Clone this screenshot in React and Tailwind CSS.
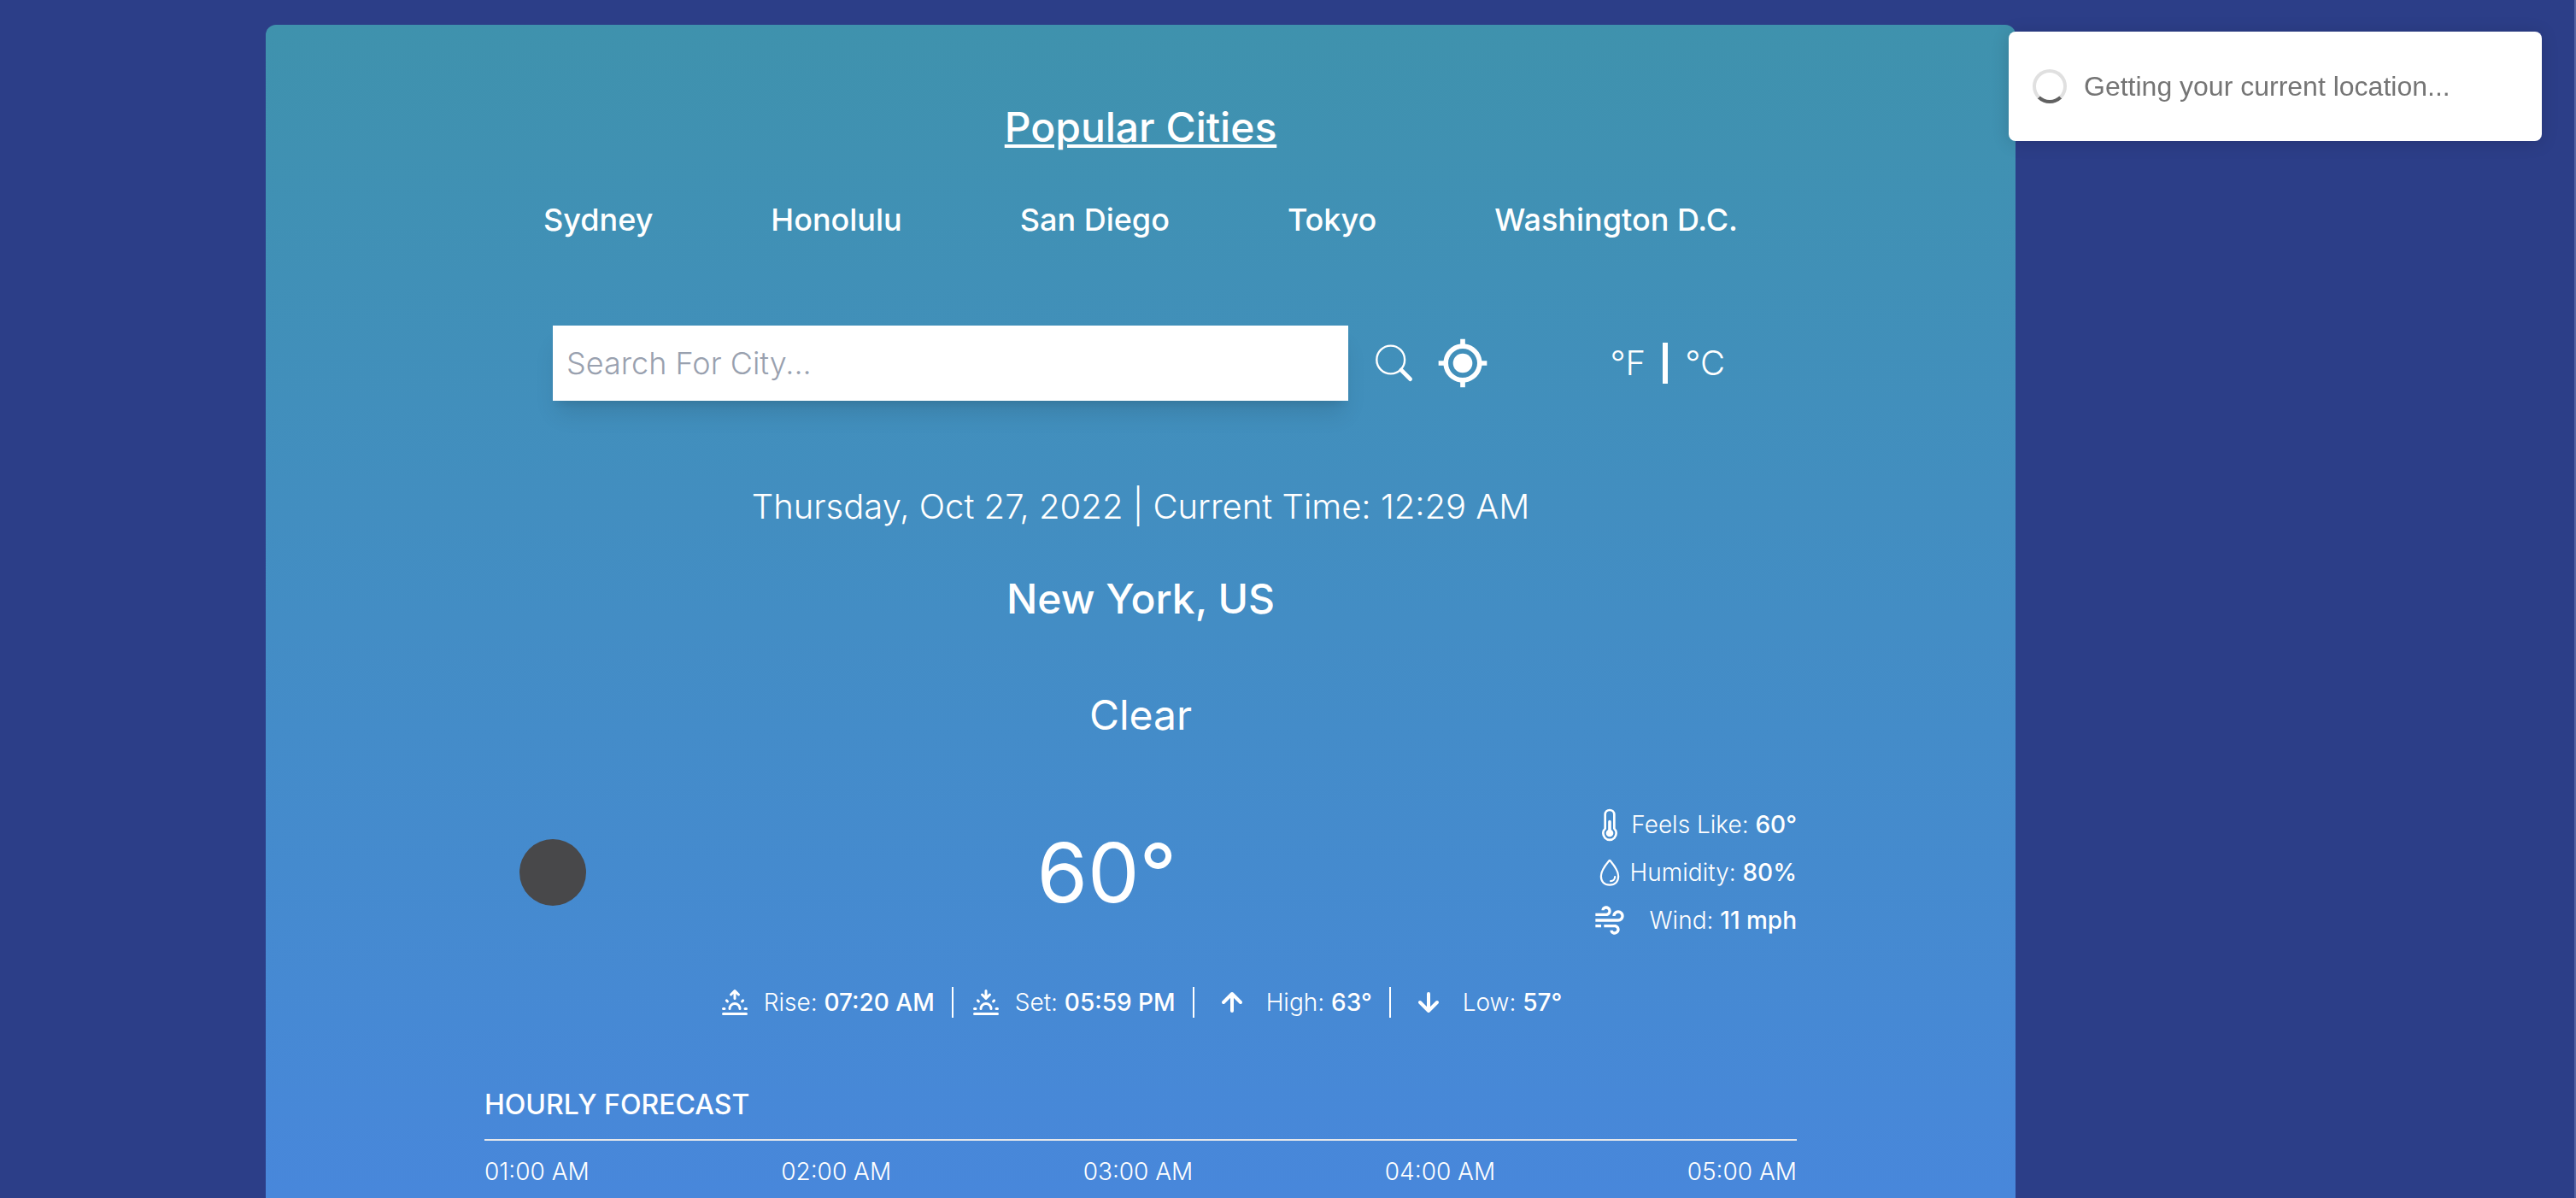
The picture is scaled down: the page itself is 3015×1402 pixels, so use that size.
import { BiCurrentLocation, BiWind } from "react-icons/bi";
import { IoWaterOutline } from "react-icons/io5";
import { TbSunrise, TbSunset } from "react-icons/tb";

const cities = ["Sydney", "Honolulu", "San Diego", "Tokyo", "Washington D.C."];
const hours = ["01:00 AM", "02:00 AM", "03:00 AM", "04:00 AM", "05:00 AM"];

function SearchIcon() {
  return (
    <svg viewBox="0 0 48 48" className="size-12" fill="none" stroke="currentColor" strokeLinecap="round" aria-hidden="true">
      <circle cx="19.7" cy="20" r="16.4" strokeWidth="2.4" />
      <path d="M32 32L42.6 42.6" strokeWidth="4.8" />
    </svg>
  );
}

function ArrowIcon({ d }) {
  return (
    <svg viewBox="0 0 40 40" className="size-10" fill="none" stroke="currentColor" strokeWidth="4" strokeLinecap="round" strokeLinejoin="round" aria-hidden="true">
      <path d={d} />
    </svg>
  );
}
const UpIcon = () => <ArrowIcon d="M20 30V10M10 20L20 10L30 20" />;
const DownIcon = () => <ArrowIcon d="M20 10V30M10 20L20 30L30 20" />;

function ThermometerIcon() {
  return (
    <svg viewBox="0 0 120 120" className="size-10" fill="none" stroke="currentColor" strokeLinecap="round" aria-hidden="true">
      <path d="M44 74V25a16 16 0 0 1 32 0V74a23 23 0 1 1-32 0Z" strokeWidth="8" strokeLinejoin="round" />
      <path d="M60 50V90" strokeWidth="11" />
      <circle cx="60" cy="90" r="13" fill="currentColor" stroke="none" />
    </svg>
  );
}

const details = [
  { icon: <ThermometerIcon />, label: "Feels Like:", value: "60°" },
  { icon: <IoWaterOutline className="size-9" />, label: "Humidity:", value: "80%" },
  { icon: <BiWind className="size-10" />, label: "Wind:", value: "11 mph" },
];
const sun = [
  { icon: <TbSunrise className="size-9" />, label: "Rise:", value: "07:20 AM" },
  { icon: <TbSunset className="size-9" />, label: "Set:", value: "05:59 PM" },
  { icon: <UpIcon />, label: "High:", value: "63°", wide: true },
  { icon: <DownIcon />, label: "Low:", value: "57°", wide: true },
];

function Toast() {
  return (
    <div role="status" className="fixed top-[37px] right-10 flex h-32 w-[624px] items-center gap-5 rounded-lg bg-white px-7 font-['Liberation_Sans',sans-serif] text-[32px] text-[#757575] shadow-[0_2px_20px_rgba(0,0,0,0.15)]">
      <span className="size-10 rounded-full border-4 border-[#e0e0e0] border-b-[#616161]" />
      <span>Getting your current location...</span>
    </div>
  );
}

export default function App() {
  return (
    <div className="flex min-h-screen border-r-2 border-[#5663a2] bg-[#2c3e88] pt-[29px] pr-[343px] font-['Inter',sans-serif] text-white">
      <main className="mx-auto w-full max-w-[2048px] rounded-t-xl bg-linear-to-b from-[#3f92ad] to-[#4887db] px-64 pt-[92px]">
        <h2 className="text-center text-[48px] leading-14 font-medium underline">Popular Cities</h2>
        <nav className="mt-13 flex justify-around text-[36px] leading-14 font-medium">
          {cities.map((c) => (
            <button key={c} type="button">{c}</button>
          ))}
        </nav>

        <div className="mt-24 flex items-center pr-21 pl-20">
          <input
            type="text"
            aria-label="Search For City"
            placeholder="Search For City..."
            className="h-22 min-w-0 flex-1 bg-white px-4 text-[36px] font-light text-gray-700 shadow-xl placeholder:text-gray-400"
          />
          <button type="button" aria-label="Search" className="ml-[30px]">
            <SearchIcon />
          </button>
          <button type="button" aria-label="Use my location" className="ml-[22px]">
            <BiCurrentLocation className="size-17" />
          </button>
          <div className="ml-[138px] flex items-center gap-5 text-[40px] font-light">
            <button type="button">°F</button>
            <span className="h-12 w-[6px] bg-white" />
            <button type="button">°C</button>
          </div>
        </div>

        <p className="mt-24 text-center text-[40px] leading-14 font-light">
          Thursday, Oct 27, 2022 | Current Time: 12:29 AM
        </p>
        <h1 className="mt-12 text-center text-[48px] leading-16 font-medium">New York, US</h1>
        <p className="mt-18 text-center text-[48px] leading-16">Clear</p>

        <div className="mt-17 flex items-center justify-between">
          <div className="flex size-40 items-center justify-center">
            <span className="size-[78px] rounded-full bg-[#48484a]" />
          </div>
          <p className="text-[96px] leading-24">60°</p>
          <div>
            {details.map((d) => (
              <div key={d.label} className="flex h-14 items-center justify-between gap-1 text-[28px] font-light">
                <span className="flex w-10 justify-center">{d.icon}</span>
                <p>{d.label} <span className="font-medium">{d.value}</span></p>
              </div>
            ))}
          </div>
        </div>

        <div className="mt-10 flex h-14 items-center justify-center text-[28px] font-light">
          {sun.map((s, i) => (
            <div key={s.label} className="flex items-center">
              {i > 0 && <span className="mx-5 h-9 w-[2px] bg-white" />}
              <span className={s.wide ? "mr-5 ml-1" : "mr-4"}>{s.icon}</span>
              <p>{s.label} <span className="font-medium">{s.value}</span></p>
            </div>
          ))}
        </div>

        <h2 className="mt-17 text-[32px] leading-12 font-medium">HOURLY FORECAST</h2>
        <hr className="mt-4 border-t-2 border-gray-200" />
        <div className="mt-4 flex justify-between text-[28px] leading-10 font-light">
          {hours.map((h) => (
            <p key={h}>{h}</p>
          ))}
        </div>
      </main>
      <Toast />
    </div>
  );
}
